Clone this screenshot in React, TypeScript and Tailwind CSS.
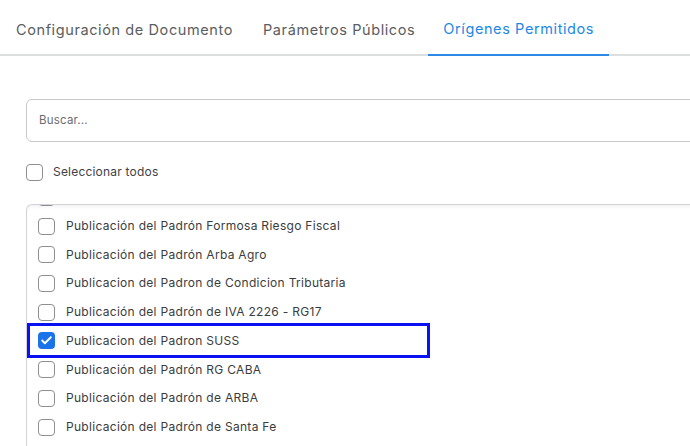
import { Check } from "lucide-react";

const items = [
  { label: "Publicación del Padrón Formosa Riesgo Agro", checked: false },
  { label: "Publicación del Padrón Formosa Riesgo Fiscal", checked: false },
  { label: "Publicación del Padrón Arba Agro", checked: false },
  { label: "Publicacion del Padron de Condicion Tributaria", checked: false },
  { label: "Publicación del Padrón de IVA 2226 - RG17", checked: false },
  { label: "Publicacion del Padron SUSS", checked: true, focused: true },
  { label: "Publicación del Padrón RG CABA", checked: false },
  { label: "Publicación del Padrón de ARBA", checked: false },
  { label: "Publicación del Padrón de Santa Fe", checked: false },
  { label: "Publicación del Padrón de Córdoba", checked: false },
];

function Box({ checked }: { checked?: boolean }) {
  if (checked) {
    return (
      <span className="flex size-[17px] shrink-0 items-center justify-center rounded-[4px] bg-[#1a73e8]">
        <Check className="size-[13px] text-white" strokeWidth={3.5} />
      </span>
    );
  }
  return (
    <span className="size-[17px] shrink-0 rounded-[4px] border-[1.5px] border-[#8e8e96] bg-white" />
  );
}

export default function App() {
  return (
    <div className="h-[446px] w-[690px] overflow-hidden bg-white font-['Inter',sans-serif]">
      {/* tabs */}
      <div className="flex h-[56px] border-b-2 border-[#dcdee0] pl-[1px] text-[14.5px] tracking-[0.6px]">
        <div className="flex items-center px-[15px] pt-[6px] text-[#5a5d61]">
          Configuración de Documento
        </div>
        <div className="flex items-center px-[15px] pt-[6px] text-[#5a5d61]">
          Parámetros Públicos
        </div>
        <div className="-mb-[2px] ml-[-2px] flex items-center border-b-2 border-[#2a8ae6] px-[15px] pt-[4px] text-[#1e88e5]">
          Orígenes Permitidos
        </div>
      </div>

      <div className="pl-[26px] pt-[43px]">
        {/* search */}
        <div className="-mr-4 flex h-[43px] items-center rounded-l-[6px] border border-[#c9c9cc] pl-[12px] text-[11.5px] tracking-[0.2px] text-[#6b6b70]">
          Buscar...
        </div>

        {/* select all */}
        <div className="mt-[21px] flex items-center gap-[10px]">
          <Box />
          <span className="text-[12px] tracking-[0.2px] text-[#3f4145]">Seleccionar todos</span>
        </div>

        {/* list */}
        <div className="-mr-4 mt-[23px] h-[260px] overflow-hidden rounded-tl-[6px] border-l border-t border-[#d4d4d8] shadow-[inset_0_4px_4px_-3px_rgba(0,0,0,0.08)]">
          <div className="-mt-[22px] flex flex-col">
            {items.map((it) => (
              <div
                key={it.label}
                className={
                  it.focused
                    ? "relative -my-[3px] mr-[276px] flex h-[35px] items-center gap-[11px] border-[3px] border-[#0b12f2] pl-[8px]"
                    : "flex h-[28.7px] items-center gap-[11px] pl-[11px]"
                }
              >
                <Box checked={it.checked} />
                <span className="whitespace-nowrap text-[12px] tracking-[0.3px] text-[#3a3c40]">
                  {it.label}
                </span>
              </div>
            ))}
          </div>
        </div>
      </div>
    </div>
  );
}
